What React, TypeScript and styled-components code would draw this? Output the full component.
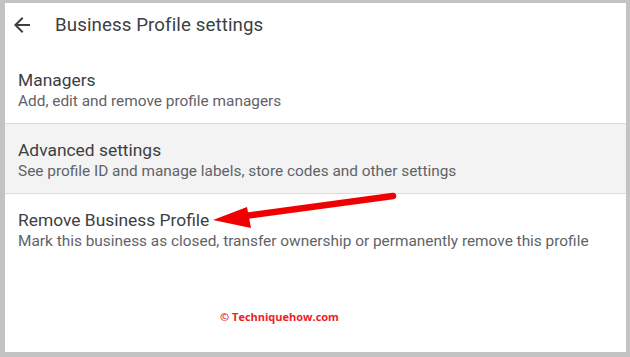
import styled, { createGlobalStyle } from "styled-components";

const GlobalStyle = createGlobalStyle`
  html, body {
    margin: 0;
    padding: 0;
    background: #c3c3c3;
  }
  body {
    font-family: Roboto, "Liberation Sans", Arial, sans-serif;
  }
`;

const items = [
  {
    id: 1,
    title: "Managers",
    text: "Add, edit and remove profile managers",
    active: false,
  },
  {
    id: 2,
    title: "Advanced settings",
    text: "See profile ID and manage labels, store codes and other settings",
    active: true,
  },
  {
    id: 3,
    title: "Remove Business Profile",
    text: "Mark this business as closed, transfer ownership or permanently remove this profile",
    active: false,
  },
];

const BackIcon = () => (
  <svg width="24" height="24" viewBox="0 0 24 24" fill="#3c4043">
    <path d="M20 11H7.83l5.59-5.59L12 4l-8 8 8 8 1.41-1.41L7.83 13H20v-2z" />
  </svg>
);

const App = () => {
  return (
    <Frame>
      <GlobalStyle />
      <Panel>
        <Header>
          <BackButton>
            <BackIcon />
          </BackButton>
          <Title>Business Profile settings</Title>
        </Header>
        <List>
          {items.map((item, i) => (
            <Row key={item.id} $active={item.active} $divider={i > 0}>
              <RowTitle>{item.title}</RowTitle>
              <RowText>{item.text}</RowText>
            </Row>
          ))}
        </List>
        <Watermark>© Techniquehow.com</Watermark>
        <Pointer viewBox="0 0 621 349">
          <line
            x1="240"
            y1="213"
            x2="388"
            y2="193"
            stroke="#f00000"
            strokeWidth="6.5"
            strokeLinecap="round"
          />
          <polygon points="208,217 242,204 246,225" fill="#f00000" />
        </Pointer>
      </Panel>
    </Frame>
  );
};

export default App;

const Frame = styled.div`
  width: 630px;
  height: 357px;
  box-sizing: border-box;
  padding: 3px 4px 5px 5px;
`;

const Panel = styled.div`
  position: relative;
  height: 100%;
  background: #ffffff;
  overflow: hidden;
`;

const Header = styled.div`
  height: 44px;
  display: flex;
  align-items: center;
`;

const BackButton = styled.div`
  width: 24px;
  height: 24px;
  margin-left: 5px;
  display: flex;
`;

const Title = styled.h1`
  margin: 0 0 0 21px;
  font-size: 18.7px;
  font-weight: 400;
  color: #3c4043;
  letter-spacing: 0.1px;
`;

const List = styled.div`
  padding-top: 7px;
`;

const Row = styled.div<{ $active: boolean; $divider: boolean }>`
  position: relative;
  padding: 15px 0 12px 13px;
  background: ${(p) => (p.$active ? "#f3f3f3" : "transparent")};
  border-top: ${(p) => (p.$divider ? "1px solid #dcdcdc" : "none")};
`;

const RowTitle = styled.div`
  font-size: 17.4px;
  line-height: 22px;
  color: #3c4043;
`;

const RowText = styled.div`
  font-size: 15.4px;
  line-height: 20px;
  color: #5f6368;
`;

const Watermark = styled.div`
  margin: 46px 0 0 215px;
  font-family: "Open Sans", "DejaVu Sans", sans-serif;
  font-size: 11px;
  font-weight: 700;
  color: #ee1c25;
`;

const Pointer = styled.svg`
  position: absolute;
  left: 0;
  top: 0;
  width: 621px;
  height: 349px;
  pointer-events: none;
`;
